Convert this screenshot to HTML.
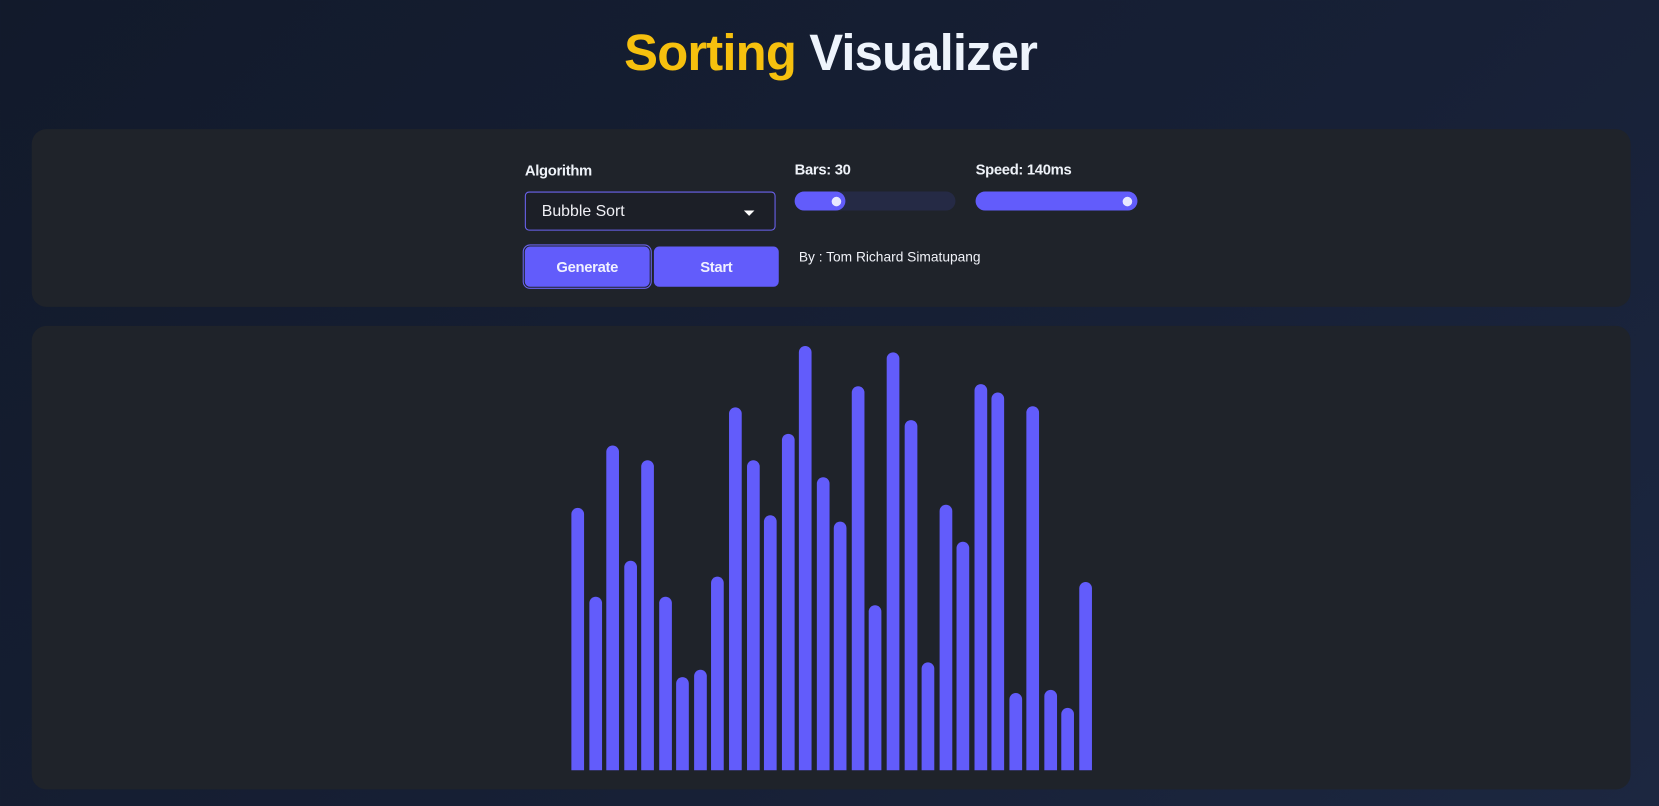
<!DOCTYPE html>
<html><head><meta charset="utf-8"><style>
*{margin:0;padding:0;box-sizing:border-box}
body{width:1659px;height:806px;overflow:hidden;font-family:"Liberation Sans",sans-serif;background:linear-gradient(135deg,#121a2b 0%,#172036 60%,#1c2740 100%);color:#e8eef8}
#w{position:absolute;left:0;top:0;width:1568px;height:762px;transform:scale(1.0581);transform-origin:0 0}
h1{position:absolute;top:23px;left:0;width:1570px;text-align:center;font-size:48px;font-weight:bold;color:#eef4fc;letter-spacing:-0.8px}
h1 span{color:#f6c00e}
.panel{position:absolute;left:30px;width:1511px;background:#1f232a;border-radius:14px}
.lbl{position:absolute;font-size:14px;font-weight:bold;color:#eef2f8;letter-spacing:-0.3px}
.sel{position:absolute;left:496px;top:181px;width:237px;height:37px;border:1px solid #6b63f0;border-radius:4px;background:#1c1f27;font-size:15px;color:#f0f0f5;padding:9px 0 0 15px}
.sel:after{content:"";position:absolute;right:19px;top:17px;border-left:5px solid transparent;border-right:5px solid transparent;border-top:5px solid #fff}
.btn{position:absolute;top:233px;height:38px;background:#625cfb;border-radius:5px;color:#f0f0ff;font-weight:bold;font-size:14px;text-align:center;line-height:38px;letter-spacing:-0.3px}
.track{position:absolute;height:18px;border-radius:9px;background:#252a45}
.fill{position:absolute;left:0;top:0;height:18px;border-radius:9px;background:#625cfb}
.knob{position:absolute;top:5px;width:9px;height:9px;border-radius:50%;background:#e8e8ff}
.bar{position:absolute;width:12px;height:0;background:#625cfb;border-radius:6px 6px 0 0}
</style></head><body>
<div id="w">
<h1><span>Sorting</span> Visualizer</h1>
<div class="panel" style="top:122px;height:168px"></div>
<div class="panel" style="top:308px;height:438px"></div>
<div class="lbl" style="left:496px;top:153px">Algorithm</div>
<div class="lbl" style="left:751px;top:152px">Bars: 30</div>
<div class="lbl" style="left:922px;top:152px">Speed: 140ms</div>
<div class="sel">Bubble Sort</div>
<div class="btn" style="left:496px;width:118px;box-shadow:0 0 0 1px #1f232a,0 0 0 2px #6b63f0">Generate</div>
<div class="btn" style="left:618px;width:118px">Start</div>
<div class="track" style="left:751px;top:181px;width:152px"><div class="fill" style="width:48px"></div><div class="knob" style="left:35px"></div></div>
<div class="track" style="left:922px;top:181px;width:153px"><div class="fill" style="width:153px"></div><div class="knob" style="left:139px"></div></div>
<div style="position:absolute;left:755px;top:235px;font-size:13px;color:#f0f2f8">By : Tom Richard Simatupang</div>
<div id="bars"></div>
</div>
<script>
var t=[480,564,421,530,435,564,640,633,545,385,435,487,410,327,451,493,365,572,333,397,626,477,512,363,371,655,384,652,669,550];
var h="";for(var i=0;i<30;i++){h+='<div class="bar" style="left:'+(540+i*16.55).toFixed(1)+'px;top:'+t[i]+'px;height:'+(728-t[i])+'px"></div>';}
document.getElementById("bars").innerHTML=h;
</script>
</body></html>
